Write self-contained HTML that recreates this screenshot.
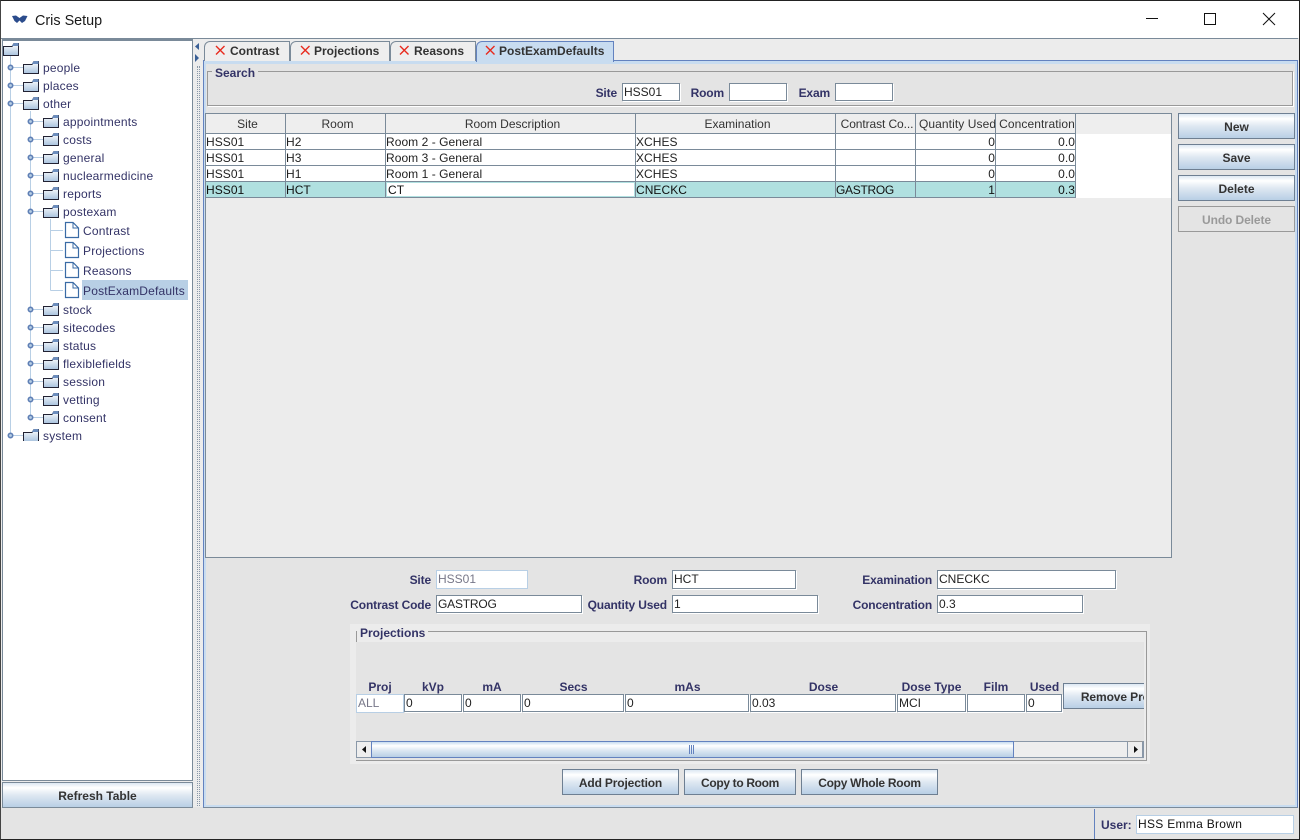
<!DOCTYPE html>
<html><head><meta charset="utf-8"><title>Cris Setup</title>
<style>
html,body{margin:0;padding:0}
body{width:1300px;height:840px;overflow:hidden;position:relative;background:#e4e4e4;font-family:"Liberation Sans",sans-serif;font-size:12px;color:#333366}
div,svg{position:absolute;box-sizing:border-box}
.t{white-space:nowrap;line-height:14px;height:14px}
.tree{color:#333366;letter-spacing:.2px}
.l{font-weight:bold;color:#333366;white-space:nowrap;line-height:14px;height:14px;text-align:right;letter-spacing:-.15px}
.c{text-align:center;letter-spacing:0}
.f{background:#fff;border:1px solid #7a8a99;box-shadow:1px 1px 0 #fff;color:#222;line-height:16px;padding-left:1px;white-space:nowrap;overflow:hidden}
.dis{border-color:#b8cfe5;color:#778;box-shadow:none}
.b{border:1px solid #6e7f92;background:linear-gradient(#dde8f3 0,#fff 20%,#dfe8f2 50%,#b8cfe5 100%);font-weight:bold;color:#333;text-align:center;white-space:nowrap;overflow:hidden}
.tab{height:20px;border:1px solid #7a8a99;border-bottom:none;border-radius:6px 0 0 0;background:#eee;font-weight:bold;color:#333;line-height:19px;white-space:nowrap}
.th{top:114px;height:20px;border-right:1px solid #7a8a99;color:#333;text-align:center;line-height:20px;white-space:nowrap;overflow:hidden;padding-left:4px}
.td{height:16px;border-right:1px solid #7a8a99;border-bottom:1px solid #7a8a99;color:#222;line-height:17px;padding-left:0;white-space:nowrap;overflow:hidden;letter-spacing:.05px}
.r{text-align:right;padding-right:0;padding-left:0}
.sel{background:#b0e0e0;color:#111}
.x{left:10px;top:3px}
</style></head><body>
<!-- window frame -->
<div style="left:0;top:0;width:1300px;height:840px;border:1px solid #222;border-left-color:#444;z-index:20;pointer-events:none"></div>
<div style="left:1px;top:1px;width:1298px;height:37px;background:#fff"></div>
<div style="left:1px;top:38px;width:1297px;height:1px;background:#7a8a99"></div>
<svg style="left:11px;top:14px" width="18" height="10" viewBox="0 0 18 10"><path d="M1 2 L5 1.5 L8.5 4 L12 1.5 L16.5 2 L14 7 L11 9 L8.5 6.5 L6 9 L3.5 7Z" fill="#2b4c8c"/></svg>
<div class="t" style="left:35px;top:12px;font-size:14.4px;line-height:18px;height:18px;color:#1a1a1a">Cris Setup</div>
<svg style="left:1145px;top:12px" width="20" height="14"><path d="M1 6.5H13" stroke="#111" stroke-width="1"/></svg>
<svg style="left:1204px;top:13px" width="13" height="13"><rect x=".5" y=".5" width="11" height="11" fill="none" stroke="#111"/></svg>
<svg style="left:1262px;top:12px" width="15" height="15"><path d="M1 1L13 13M13 1L1 13" stroke="#111" stroke-width="1"/></svg>

<!-- main bg -->
<div style="left:1px;top:39px;width:1298px;height:768px;background:#ececec"></div>

<!-- tree -->
<div style="left:2px;top:39px;width:191px;height:742px;background:#fff;border:1px solid #7a8a99;border-top-width:2px"></div>
<svg style="left:3px;top:41px" width="188" height="400" fill="none">
<defs><linearGradient id="g" x1="0" y1="0" x2="0" y2="1"><stop offset="0" stop-color="#fff"/><stop offset="1" stop-color="#a9c3de"/></linearGradient>
<g id="fo"><path d="M.5 4.5H9L11 1.5H15.5V13.5H.5Z" fill="url(#g)" stroke="#223"/><path d="M9 3.5L11 1H15.5V4H9Z" fill="#6c8dbd"/></g>
<g id="pg"><path d="M62.5 181.5H70L75.5 187V196.5H62.5Z" fill="#fff" stroke="#3a6ba5" stroke-width="1.2"/><path d="M70 181.5V187H75.5" stroke="#3a6ba5"/></g>
</defs>
<g stroke="#b8cfe5"><path d="M7.5 12V394M7.5 26.5H20M7.5 44.5H20M7.5 62.5H20M7.5 394.5H20M27.5 70V376M27.5 80.5H40M27.5 98.5H40M27.5 116.5H40M27.5 134.5H40M27.5 152.5H40M27.5 170.5H40M27.5 268.5H40M27.5 286.5H40M27.5 304.5H40M27.5 322.5H40M27.5 340.5H40M27.5 358.5H40M27.5 376.5H40M47.5 178V249.5M47.5 189.5H60M47.5 209.5H60M47.5 229.5H60M47.5 249.5H60"/></g>
<g fill="#b8cfe5" stroke="#5f7fb5" stroke-width="1.6"><circle cx="7.5" cy="26.5" r="2.2"/><circle cx="7.5" cy="44.5" r="2.2"/><circle cx="7.5" cy="62.5" r="2.2"/><circle cx="7.5" cy="394.5" r="2.2"/><circle cx="27.5" cy="80.5" r="2.2"/><circle cx="27.5" cy="98.5" r="2.2"/><circle cx="27.5" cy="116.5" r="2.2"/><circle cx="27.5" cy="134.5" r="2.2"/><circle cx="27.5" cy="152.5" r="2.2"/><circle cx="27.5" cy="170.5" r="2.2"/><circle cx="27.5" cy="268.5" r="2.2"/><circle cx="27.5" cy="286.5" r="2.2"/><circle cx="27.5" cy="304.5" r="2.2"/><circle cx="27.5" cy="322.5" r="2.2"/><circle cx="27.5" cy="340.5" r="2.2"/><circle cx="27.5" cy="358.5" r="2.2"/><circle cx="27.5" cy="376.5" r="2.2"/></g>
<use href="#fo" x="0" y="1"/>
<use href="#fo" x="20" y="19"/><use href="#fo" x="20" y="37"/><use href="#fo" x="20" y="55"/><use href="#fo" x="20" y="387"/>
<use href="#fo" x="40" y="73"/><use href="#fo" x="40" y="91"/><use href="#fo" x="40" y="109"/><use href="#fo" x="40" y="127"/><use href="#fo" x="40" y="145"/><use href="#fo" x="40" y="163"/>
<use href="#fo" x="40" y="261"/><use href="#fo" x="40" y="279"/><use href="#fo" x="40" y="297"/><use href="#fo" x="40" y="315"/><use href="#fo" x="40" y="333"/><use href="#fo" x="40" y="351"/><use href="#fo" x="40" y="369"/>
<use href="#pg"/><use href="#pg" y="20"/><use href="#pg" y="40"/><use href="#pg" y="60"/>
</svg>
<div style="left:82px;top:280px;width:106px;height:20px;background:#b8cfe5"></div>
<div class="t tree" style="left:43px;top:61px">people</div>
<div class="t tree" style="left:43px;top:79px">places</div>
<div class="t tree" style="left:43px;top:97px">other</div>
<div class="t tree" style="left:63px;top:115px">appointments</div>
<div class="t tree" style="left:63px;top:133px">costs</div>
<div class="t tree" style="left:63px;top:151px">general</div>
<div class="t tree" style="left:63px;top:169px">nuclearmedicine</div>
<div class="t tree" style="left:63px;top:187px">reports</div>
<div class="t tree" style="left:63px;top:205px">postexam</div>
<div class="t tree" style="left:83px;top:224px">Contrast</div>
<div class="t tree" style="left:83px;top:244px">Projections</div>
<div class="t tree" style="left:83px;top:264px">Reasons</div>
<div class="t tree" style="left:83px;top:284px">PostExamDefaults</div>
<div class="t tree" style="left:63px;top:303px">stock</div>
<div class="t tree" style="left:63px;top:321px">sitecodes</div>
<div class="t tree" style="left:63px;top:339px">status</div>
<div class="t tree" style="left:63px;top:357px">flexiblefields</div>
<div class="t tree" style="left:63px;top:375px">session</div>
<div class="t tree" style="left:63px;top:393px">vetting</div>
<div class="t tree" style="left:63px;top:411px">consent</div>
<div class="t tree" style="left:43px;top:429px">system</div>

<div class="b" style="left:2px;top:782px;width:191px;height:26px;line-height:26px;border-color:#7a8a99">Refresh Table</div>

<!-- splitter -->
<div style="left:197px;top:66px;width:0;height:740px;border-left:1px dotted #8a98a8"></div>
<div style="left:199px;top:66px;width:0;height:740px;border-left:1px dotted #8a98a8"></div>
<svg style="left:194px;top:42px" width="7" height="22"><path d="M5 1V8L1 4.5Z" fill="#3a5f95"/><path d="M1 12V20L5 16Z" fill="#3a5f95"/></svg>

<!-- tab pane -->
<div style="left:203px;top:60px;width:1095px;height:748px;background:#e4e4e4;border:1px solid #6382bf;border-bottom-color:#7a8a99;box-shadow:inset 0 0 0 2px #c8dcf0"></div>
<div style="left:205px;top:61px;width:1091px;height:3px;background:#c8dcf0"></div>
<div style="left:204px;top:805px;width:1093px;height:2px;background:#c8dcf0"></div>

<div class="tab" style="left:204px;top:41px;width:86px;padding-left:25px"><svg class="x" width="10" height="10"><path d="M1 1L9.5 9.5M9.5 1L1 9.5" stroke="#e8291c" stroke-width="1.4"/></svg>Contrast</div>
<div class="tab" style="left:290px;top:41px;width:100px;padding-left:23px"><svg class="x" style="left:9px" width="10" height="10"><path d="M1 1L9.5 9.5M9.5 1L1 9.5" stroke="#e8291c" stroke-width="1.4"/></svg>Projections</div>
<div class="tab" style="left:390px;top:41px;width:86px;padding-left:23px"><svg class="x" style="left:8px" width="10" height="10"><path d="M1 1L9.5 9.5M9.5 1L1 9.5" stroke="#e8291c" stroke-width="1.4"/></svg>Reasons</div>
<div class="tab" style="left:476px;top:41px;width:138px;height:21px;padding-left:22px;background:#c8dcf0;border-color:#6382bf"><svg class="x" style="left:8px" width="10" height="10"><path d="M1 1L9.5 9.5M9.5 1L1 9.5" stroke="#e8291c" stroke-width="1.4"/></svg>PostExamDefaults</div>

<!-- search -->
<div style="left:207px;top:71px;width:1086px;height:35px;border:1px solid #999;box-shadow:1px 1px 0 #fff"></div>
<div class="t" style="left:212px;top:66px;background:#e4e4e4;padding:0 3px;font-weight:bold">Search</div>
<div class="l" style="left:590px;top:86px;width:27px">Site</div>
<div class="f" style="left:622px;top:83px;width:58px;height:18px">HSS01</div>
<div class="l" style="left:685px;top:86px;width:39px">Room</div>
<div class="f" style="left:729px;top:83px;width:58px;height:18px"></div>
<div class="l" style="left:790px;top:86px;width:40px">Exam</div>
<div class="f" style="left:835px;top:83px;width:58px;height:18px"></div>

<!-- table -->
<div style="left:205px;top:113px;width:967px;height:445px;background:#ececec;border:1px solid #7a8a99"></div>
<div style="left:206px;top:134px;width:965px;height:64px;background:#fff"></div>
<div style="left:206px;top:114px;width:965px;height:20px;background:#eee"></div>
<div style="left:205px;top:133px;width:871px;height:1px;background:#7a8a99"></div>
<div class="th" style="left:206px;width:80px">Site</div>
<div class="th" style="left:286px;width:100px">Room</div>
<div class="th" style="left:386px;width:250px">Room Description</div>
<div class="th" style="left:636px;width:200px">Examination</div>
<div class="th" style="left:836px;width:80px;padding-left:3px;letter-spacing:-.1px">Contrast Co...</div>
<div class="th" style="left:916px;width:80px;padding-left:3px;letter-spacing:.08px">Quantity Used</div>
<div class="th" style="left:996px;width:80px;padding-left:3px;letter-spacing:.08px">Concentration</div>

<div class="td" style="left:206px;top:134px;width:80px">HSS01</div><div class="td" style="left:286px;top:134px;width:100px">H2</div><div class="td" style="left:386px;top:134px;width:250px">Room 2 - General</div><div class="td" style="left:636px;top:134px;width:200px">XCHES</div><div class="td" style="left:836px;top:134px;width:80px"></div><div class="td r" style="left:916px;top:134px;width:80px">0</div><div class="td r" style="left:996px;top:134px;width:80px">0.0</div>
<div class="td" style="left:206px;top:150px;width:80px">HSS01</div><div class="td" style="left:286px;top:150px;width:100px">H3</div><div class="td" style="left:386px;top:150px;width:250px">Room 3 - General</div><div class="td" style="left:636px;top:150px;width:200px">XCHES</div><div class="td" style="left:836px;top:150px;width:80px"></div><div class="td r" style="left:916px;top:150px;width:80px">0</div><div class="td r" style="left:996px;top:150px;width:80px">0.0</div>
<div class="td" style="left:206px;top:166px;width:80px">HSS01</div><div class="td" style="left:286px;top:166px;width:100px">H1</div><div class="td" style="left:386px;top:166px;width:250px">Room 1 - General</div><div class="td" style="left:636px;top:166px;width:200px">XCHES</div><div class="td" style="left:836px;top:166px;width:80px"></div><div class="td r" style="left:916px;top:166px;width:80px">0</div><div class="td r" style="left:996px;top:166px;width:80px">0.0</div>
<div class="td sel" style="left:206px;top:182px;width:80px">HSS01</div><div class="td sel" style="left:286px;top:182px;width:100px">HCT</div><div class="td sel" style="left:386px;top:182px;width:250px"><div style="left:1px;top:1px;width:247px;height:13px;background:#fff"></div><div style="left:2px;top:0;line-height:17px;height:15px;color:#111">CT</div></div><div class="td sel" style="left:636px;top:182px;width:200px">CNECKC</div><div class="td sel" style="left:836px;top:182px;width:80px;letter-spacing:-.3px">GASTROG</div><div class="td sel r" style="left:916px;top:182px;width:80px">1</div><div class="td sel r" style="left:996px;top:182px;width:80px">0.3</div>

<!-- right buttons -->
<div class="b" style="left:1178px;top:113px;width:117px;height:26px;line-height:26px">New</div>
<div class="b" style="left:1178px;top:144px;width:117px;height:26px;line-height:26px">Save</div>
<div class="b" style="left:1178px;top:175px;width:117px;height:26px;line-height:26px">Delete</div>
<div class="b" style="left:1178px;top:206px;width:117px;height:26px;line-height:26px;background:#e4e4e4;border-color:#999;color:#999;letter-spacing:-.1px">Undo Delete</div>

<!-- form -->
<div class="l" style="left:380px;top:573px;width:51px">Site</div>
<div class="f dis" style="left:436px;top:570px;width:92px;height:19px;">HSS01</div>
<div class="l" style="left:610px;top:573px;width:57px">Room</div>
<div class="f" style="left:672px;top:570px;width:124px;height:19px">HCT</div>
<div class="l" style="left:840px;top:573px;width:92px">Examination</div>
<div class="f" style="left:937px;top:570px;width:179px;height:19px">CNECKC</div>
<div class="l" style="left:340px;top:598px;width:91px">Contrast Code</div>
<div class="f" style="left:436px;top:595px;width:146px;height:18px;letter-spacing:-.2px">GASTROG</div>
<div class="l" style="left:580px;top:598px;width:87px">Quantity Used</div>
<div class="f" style="left:672px;top:595px;width:146px;height:18px">1</div>
<div class="l" style="left:840px;top:598px;width:92px">Concentration</div>
<div class="f" style="left:937px;top:595px;width:146px;height:18px">0.3</div>

<!-- projections -->
<div style="left:350px;top:624px;width:800px;height:140px;background:#ececec"></div>
<div style="left:356px;top:631px;width:791px;height:130px;border:1px solid #999"></div>
<div style="left:356px;top:642px;width:788px;height:118px;background:#e4e4e4"></div>
<div class="t" style="left:357px;top:626px;background:#ececec;padding:0 3px;font-weight:bold">Projections</div>

<div class="l c" style="left:357px;top:680px;width:46px">Proj</div>
<div class="l c" style="left:404px;top:680px;width:58px">kVp</div>
<div class="l c" style="left:463px;top:680px;width:58px">mA</div>
<div class="l c" style="left:522px;top:680px;width:103px">Secs</div>
<div class="l c" style="left:625px;top:680px;width:125px">mAs</div>
<div class="l c" style="left:751px;top:680px;width:145px">Dose</div>
<div class="l c" style="left:897px;top:680px;width:69px">Dose Type</div>
<div class="l c" style="left:967px;top:680px;width:58px">Film</div>
<div class="l c" style="left:1026px;top:680px;width:37px">Used</div>
<div class="f dis" style="left:356px;top:694px;width:48px;height:19px">ALL</div>
<div class="f" style="left:404px;top:694px;width:58px;height:18px">0</div>
<div class="f" style="left:463px;top:694px;width:58px;height:18px">0</div>
<div class="f" style="left:522px;top:694px;width:102px;height:18px">0</div>
<div class="f" style="left:625px;top:694px;width:124px;height:18px">0</div>
<div class="f" style="left:750px;top:694px;width:146px;height:18px">0.03</div>
<div class="f" style="left:897px;top:694px;width:69px;height:18px">MCI</div>
<div class="f" style="left:967px;top:694px;width:58px;height:18px"></div>
<div class="f" style="left:1026px;top:694px;width:36px;height:18px">0</div>
<div style="left:1063px;top:683px;width:81px;height:26px;overflow:hidden"><div class="b" style="left:0;top:0;width:108px;height:26px;line-height:26px;letter-spacing:-.1px">Remove Proj</div></div>

<!-- scrollbar -->
<div style="left:356px;top:741px;width:788px;height:17px;background:#eee;border:1px solid #8a98a8"></div>
<svg style="left:357px;top:742px" width="14" height="15"><path d="M9 4V11L5 7.5Z" fill="#111"/></svg>
<div style="left:371px;top:741px;width:643px;height:17px;background:linear-gradient(#c8dcf0,#fff 25%,#dde8f3 55%,#b8cfe5);border:1px solid #6382bf"></div>
<svg style="left:689px;top:745px" width="7" height="9"><path d="M.5 0V9M2.5 0V9M4.5 0V9" stroke="#6382bf"/></svg>
<div style="left:1127px;top:741px;width:16px;height:17px;background:#eee;border:1px solid #8a98a8;border-top-color:#999"></div>
<svg style="left:1129px;top:742px" width="14" height="15"><path d="M5 4V11L9 7.5Z" fill="#111"/></svg>

<div class="b" style="left:562px;top:769px;width:117px;height:26px;line-height:26px;letter-spacing:-.15px">Add Projection</div>
<div class="b" style="left:684px;top:769px;width:112px;height:26px;line-height:26px;letter-spacing:-.33px">Copy to Room</div>
<div class="b" style="left:801px;top:769px;width:137px;height:26px;line-height:26px;letter-spacing:-.27px">Copy Whole Room</div>

<!-- status bar -->
<div style="left:1px;top:808px;width:1298px;height:31px;background:#e4e4e4"></div>
<div style="left:1094px;top:809px;width:1px;height:30px;background:#6382bf"></div>
<div class="l" style="left:1101px;top:818px;width:30px;text-align:left;letter-spacing:0">User:</div>
<div class="f" style="left:1136px;top:815px;width:158px;height:19px;border-color:#b8cfe5;box-shadow:none;color:#111;letter-spacing:.3px">HSS Emma Brown</div>
</body></html>
